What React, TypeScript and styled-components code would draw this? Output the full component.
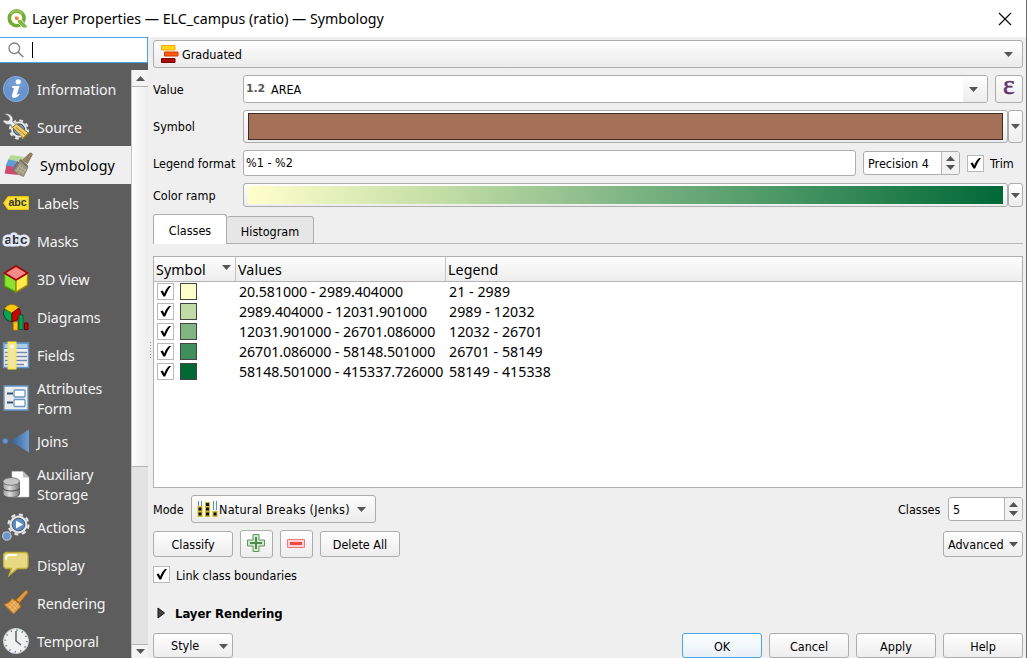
import React from 'react';
import styled, { createGlobalStyle, css } from 'styled-components';

const GlobalStyle = createGlobalStyle`
  * { box-sizing: border-box; }
  body { margin: 0; overflow: hidden; }
`;

const uiFont = css`
  font-family: 'DejaVu Sans Condensed', 'DejaVu Sans', sans-serif;
  font-stretch: condensed;
  font-size: 12.5px;
  letter-spacing: 0;
  line-height: 16px;
`;
const listFont = css`
  font-family: 'Noto Sans', 'Open Sans', sans-serif;
  font-size: 14.2px;
`;

const Window = styled.div`
  width: 1027px;
  height: 658px;
  display: flex;
  flex-direction: column;
  background: #efefef;
  border-right: 1px solid #6a6a6a;
  color: #000;
  overflow: hidden;
  white-space: nowrap;
  ${uiFont}
`;
const TitleBar = styled.header`
  height: 37px;
  flex: none;
  display: flex;
  align-items: center;
  background: #fff;
  padding: 0 14px 0 7px;
`;
const Title = styled.h1`
  ${listFont}
  font-weight: 400;
  margin: 0 auto 0 5px;
  letter-spacing: 0;
`;
const Body = styled.div`
  flex: 1;
  min-height: 0;
  display: flex;
`;
const Side = styled.aside`
  width: 148px;
  flex: none;
  display: flex;
  flex-direction: column;
  background: #5d5d5d;
`;
const Search = styled.div`
  height: 26px;
  flex: none;
  margin-bottom: 7px;
  background: #fff;
  border: 1px solid #45a7ea;
  border-left: 0;
  border-radius: 0 2px 2px 0;
  display: flex;
  align-items: center;
  padding-left: 8px;
  gap: 8px;
`;
const Caret = styled.span`
  width: 1px;
  height: 16px;
  background: #000;
`;
const SideBody = styled.div`
  flex: 1;
  min-height: 0;
  display: flex;
`;
const NavList = styled.nav`
  width: 131px;
  height: 588px;
  overflow: hidden;
`;
const NavItem = styled.div<{ $active?: boolean; $tall?: boolean }>`
  ${listFont}
  letter-spacing: ${p => (p.$active ? 0.12 : -0.1)}px;
  height: ${p => (p.$tall ? 48 : 38)}px;
  display: flex;
  align-items: center;
  gap: ${p => (p.$active ? 8 : 7)}px;
  padding-left: ${p => (p.$active ? 4 : 2)}px;
  line-height: 20px;
  color: ${p => (p.$active ? '#000' : '#f4f4f4')};
  background: ${p => (p.$active ? '#efefef' : 'transparent')};
  white-space: pre-line;
  svg { flex: none; overflow: visible; }
  span { padding-top: 2px; }
`;
const ScrollBar = styled.div`
  width: 17px;
  display: flex;
  flex-direction: column;
  background: #e3e3e3;
  border-left: 1px solid #c4c4c4;
`;
const ScrollButton = styled.div<{ $end?: boolean }>`
  height: ${p => (p.$end ? 14 : 17)}px;
  flex: none;
  display: flex;
  align-items: center;
  justify-content: center;
  background: #f4f4f4;
  border-bottom: ${p => (p.$end ? 0 : 1)}px solid #b4b4b4;
  border-top: ${p => (p.$end ? 1 : 0)}px solid #b4b4b4;
`;
const ScrollThumb = styled.div`
  height: 380px;
  flex: none;
  margin-bottom: auto;
  background: linear-gradient(90deg, #fdfdfd, #ededed);
  border-bottom: 1px solid #b4b4b4;
`;
const Splitter = styled.div`
  width: 5px;
  flex: none;
  display: flex;
  flex-direction: column;
  align-items: flex-end;
  gap: 2px;
  padding: 305px 2px 0 0;
`;
const Dot = styled.i`
  width: 1px;
  height: 1px;
  background: #999;
`;
const Main = styled.main`
  width: 870px;
  flex: none;
  padding-top: 3px;
  display: flex;
  flex-direction: column;
`;
const Row = styled.div<{ $h: number; $mt?: number }>`
  display: flex;
  flex: none;
  align-items: center;
  height: ${p => p.$h}px;
  margin-top: ${p => p.$mt ?? 0}px;
`;
const Label = styled.label<{ $w?: number }>`
  width: ${p => (p.$w ? `${p.$w}px` : 'auto')};
  flex: none;
  padding-top: 1px;
`;
const frame = css`
  border: 1px solid #adadad;
  border-radius: 3px;
`;
const Button = styled.button<{ $w: number; $h?: number; $primary?: boolean; $mr?: number }>`
  ${uiFont}
  ${frame}
  border-color: ${p => (p.$primary ? '#45a7ea' : '#adadad')};
  width: ${p => p.$w}px;
  height: ${p => p.$h ?? 26}px;
  margin: 0 ${p => p.$mr ?? 0}px 0 0;
  padding: 2px 0 0;
  flex: none;
  display: flex;
  align-items: center;
  justify-content: center;
  color: #000;
  background: ${p => (p.$primary ? 'linear-gradient(#fcfeff, #e8f0f6)' : 'linear-gradient(#fefefe, #ededed)')};
`;
const IconButton = styled(Button)`
  padding: 0;
`;
const ToolButton = styled(IconButton)`
  padding: 0 2px 2px 0;
`;
const MenuButton = styled(Button)<{ $left: number; $right: number }>`
  justify-content: space-between;
  padding: 1px ${p => p.$right}px 0 ${p => p.$left}px;
`;
const Combo = styled.div<{ $w: number; $left: number; $right: number }>`
  ${frame}
  width: ${p => p.$w}px;
  height: 28px;
  display: flex;
  align-items: center;
  padding: 0 ${p => p.$right}px 0 ${p => p.$left}px;
  background: linear-gradient(#fefefe, #ebebeb);
  > svg { flex: none; }
  > svg:last-child { margin-left: auto; }
`;
const ComboText = styled.span<{ $track?: number }>`
  padding-top: 1px;
  letter-spacing: ${p => p.$track ?? 0}px;
`;
const Field = styled.div<{ $w: number; $h: number; $mr?: number }>`
  ${frame}
  width: ${p => p.$w}px;
  height: ${p => p.$h}px;
  margin-right: ${p => p.$mr ?? 0}px;
  flex: none;
  display: flex;
  align-items: center;
  background: #fff;
  padding-left: 2px;
  overflow: hidden;
`;
const TypeTag = styled.b`
  color: #5a5a5a;
  font: bold 11px 'DejaVu Sans', sans-serif;
  letter-spacing: -0.2px;
  width: 25px;
  padding-bottom: 1px;
`;
const FieldArrow = styled.span`
  width: 24px;
  height: 100%;
  margin-left: auto;
  padding-right: 3px;
  display: flex;
  align-items: center;
  justify-content: center;
  background: linear-gradient(#fdfdfd, #ededed);
`;
const Epsilon = styled.span`
  font: 28px 'Liberation Serif', serif;
  color: #63356b;
  -webkit-text-stroke: 0.5px #63356b;
  line-height: 20px;
  padding-bottom: 8px;
`;
const SwatchFrame = styled.div<{ $h: number }>`
  ${frame}
  width: 765px;
  height: ${p => p.$h}px;
  flex: none;
  padding: 2px 4px;
  background: linear-gradient(#fefefe, #ededed);
`;
const SymbolFill = styled.div`
  height: 27px;
  background: #a57058;
  border: 1px solid #3f2e27;
`;
const RampFill = styled.div`
  height: 18px;
  background: linear-gradient(90deg, #ffffcc, #c2dda5 26%, #7fb685 50%, #3f905d 75%, #006837);
`;
const Spin = styled.div<{ $w: number; $mr?: number }>`
  ${frame}
  width: ${p => p.$w}px;
  height: 24px;
  margin-right: ${p => p.$mr ?? 0}px;
  flex: none;
  display: flex;
  background: #fff;
  overflow: hidden;
  > span { flex: 1; padding: 4px 0 0 4px; }
`;
const SpinArrows = styled.div`
  width: 18px;
  border-left: 1px solid #b4b4b4;
  background: #f2f2f2;
  display: flex;
  flex-direction: column;
  align-items: center;
  justify-content: center;
  gap: 4px;
`;
const Box = styled.span`
  width: 17px;
  height: 17px;
  flex: none;
  display: flex;
  background: #fff;
  border: 1px solid #b9b9b9;
`;
const CheckText = styled.span`
  padding: 2px 0 0 6px;
`;
const Tabs = styled.div`
  height: 30px;
  margin-top: 7px;
  flex: none;
  display: flex;
  align-items: flex-end;
`;
const Tab = styled.div<{ $w: number; $active?: boolean }>`
  width: ${p => p.$w}px;
  height: ${p => (p.$active ? 30 : 28)}px;
  display: flex;
  align-items: center;
  justify-content: center;
  padding-top: 3px;
  border: 1px solid #adadad;
  border-left-width: ${p => (p.$active ? 1 : 0)}px;
  border-bottom-width: ${p => (p.$active ? 0 : 1)}px;
  border-radius: 3px 3px 0 0;
  background: ${p => (p.$active ? '#fff' : '#e6e6e6')};
`;
const TabLine = styled.div`
  flex: 1;
  height: 1px;
  background: #b9b9b9;
`;
const Table = styled.div`
  ${listFont}
  margin-top: 12px;
  height: 232px;
  flex: none;
  border: 1px solid #b0b0b0;
  background: #fff;
`;
const Head = styled.div`
  display: flex;
  height: 25px;
  border-bottom: 1px solid #b4b4b4;
  background: linear-gradient(#fdfdfd, #ededed);
`;
const HeadCell = styled.div<{ $w?: number }>`
  ${p => (p.$w ? `width: ${p.$w}px; border-right: 1px solid #c4c4c4;` : 'flex: 1;')}
  padding: 2px 4px 0 2px;
  line-height: 22px;
  display: flex;
  justify-content: space-between;
  letter-spacing: 0.1px;
  svg { margin-top: 6px; }
`;
const ClassRow = styled.div`
  display: flex;
  align-items: flex-start;
  height: 20px;
  padding: 1px 0 0 3px;
  line-height: 18px;
  letter-spacing: -0.07px;
`;
const ClassSwatch = styled.span<{ $color: string }>`
  width: 17px;
  height: 17px;
  margin: 0 42px 0 6px;
  background: ${p => p.$color};
  border: 1px solid #444;
`;
const ClassValues = styled.span`
  width: 210px;
`;
const ClassLegend = styled.span`
  letter-spacing: 0.05px;
`;
const Spacer = styled.span`
  flex: 1;
`;
const SectionTitle = styled.b`
  font: bold 13px 'DejaVu Sans Condensed', 'DejaVu Sans', sans-serif;
  font-stretch: condensed;
  letter-spacing: -0.05px;
  margin-left: 10px;
`;

const Arrow = ({ up = false, w = 9, h = 5 }: { up?: boolean; w?: number; h?: number }) => (
  <svg width={w} height={h} viewBox="0 0 10 5" preserveAspectRatio="none">
    <path d={up ? 'M0 5 5 0 10 5Z' : 'M0 0H10L5 5Z'} fill="#555" />
  </svg>
);
const Check = () => (
  <Box>
    <svg width="15" height="15" viewBox="0 0 15 15">
      <path d="M2.500 7.200 4.800 6.500 6.200 9.600C7.200 6.800 8.600 4 11 2H13C10.300 5.200 8.800 8.600 7.200 12.600H5.400Z" fill="#000" />
    </svg>
  </Box>
);
const Spinner = ({ text, w, mr }: { text: string; w: number; mr?: number }) => (
  <Spin $w={w} $mr={mr}>
    <span>{text}</span>
    <SpinArrows><Arrow up /><Arrow /></SpinArrows>
  </Spin>
);

const gearTeeth = (cx: number, cy: number, r: number, w: number) => (
  <g>
    <circle cx={cx} cy={cy} r={r - 1} fill="none" stroke="#e6e6e6" strokeWidth={w} />
    <circle cx={cx} cy={cy} r={r + w / 2} fill="none" stroke="#e6e6e6" strokeWidth={w * 0.7} strokeDasharray={`${(r + w / 2) * 0.42} ${(r + w / 2) * 0.3654}`} />
  </g>
);

const icons: Record<string, React.ReactNode> = {
  Information: (
    <>
      <circle cx="14" cy="14" r="12.6" fill="#6795cd" stroke="#86aede" />
      <path d="M4 11A10.5 10.5 0 0 1 24 11Q14 15 4 11Z" fill="#7ba4d6" opacity=".6" />
      <circle cx="16.2" cy="6.800" r="2.600" fill="#fff" />
      <path d="M10.500 11H17.500L15 19.500Q15.600 20.300 17 18.800L17.700 19.800Q14.500 23.600 11 22.800Q9.400 22 10 20L12 13.200L10 12.800Z" fill="#fff" />
    </>
  ),
  Source: (
    <>
      {gearTeeth(17, 16.5, 7.5, 3)}
      <circle cx="17" cy="16.500" r="5.600" fill="#6795cd" stroke="#444" />
      <path d="M2.500 1Q8-.5 10.500 4.500Q11.300 6.500 10.500 8.500L15 12.500L12 15.500L8.500 11.500Q4 12.500 1 8.500L2 7L6 8L8 6L6.500 3Z" fill="#eee" stroke="#777" strokeWidth=".7" />
      <path d="M10.500 14.500 14.500 11 27 20.500 22.500 26Z" fill="#edcc6c" stroke="#8d7124" />
      <path d="M14 14.500 23 22" stroke="#9b7b2b" /><path d="M21 25 26 19.500 27.500 21.500 23.500 26.500Z" fill="#7a6325" />
    </>
  ),
  Symbology: (
    <>
      <path d="M7 4 20 6 16 13 3 10Z" fill="#b8d79a" />
      <path d="M4.500 8.500 12 10 9 18 1.500 15Z" fill="#5a9fd8" />
      <path d="M2.500 14.500 10 16 14 24 .5 22.500Z" fill="#cf4a72" />
      <path d="M10 14 13 10 16 12 13 20 9 19Z" fill="#7d6a8e" />
      <path d="M16.500 8.500 22.500 13.500 24 16 19.500 25.500Q14 24 9.500 19.500Q13 16 16.500 8.500Z" fill="#9a9680" stroke="#77715b" strokeWidth=".8" />
      <path d="M12 21 16.500 13.500M15 23 19 15.500M18 24.500 21.500 17.500M13.500 18 20.500 22.500M15 15.500 22 20" stroke="#c9c4aa" strokeWidth=".6" />
      <path d="M16.500 9 23.500 15.500" stroke="#6e6a5a" strokeWidth="1.600" />
      <path d="M18.500 9 25.500 2.300Q27.500 1.300 28.500 3.200L23.500 12.500Z" fill="#988263" stroke="#76664b" strokeWidth=".7" />
    </>
  ),
  Labels: (
    <>
      <path d="M1.500 14 6 7.500H26.500V20.500H6Z" fill="#f9df31" stroke="#e3c300" />
      <text x="6.500" y="17" fontFamily="Liberation Sans" fontWeight="700" fontSize="10.500" textLength="18" lengthAdjust="spacingAndGlyphs" fill="#333">abc</text>
    </>
  ),
  Masks: (
    <text x="2.500" y="17" fontFamily="Liberation Sans" fontWeight="700" fontSize="13.500" textLength="23" fill="#333" stroke="#e4e9fb" strokeWidth="5" strokeLinejoin="round" paintOrder="stroke">abc</text>
  ),
  '3D View': (
    <>
      <path d="M2.500 8.500 14 15V27L2.500 21Z" fill="#8ae234" stroke="#4e9a06" strokeWidth="1.400" />
      <path d="M25.500 8.500 14 15V27L25.500 20Z" fill="#fce94f" stroke="#a58b00" strokeWidth="1.400" />
      <path d="M14 1 25.500 8 14 15 2.500 8Z" fill="#f58a8a" stroke="#a40000" strokeWidth="1.500" />
    </>
  ),
  Diagrams: (
    <>
      <path d="M10 10V18.500A8.500 8.500 0 0 1 2.600 5.700Z" fill="#00a651" stroke="#222" strokeWidth=".8" />
      <path d="M10 10 2.600 5.700A8.500 8.500 0 0 1 16.800 5Z" fill="#fdc70c" stroke="#9b7900" strokeWidth=".8" />
      <path d="M10 10 16.800 5A8.500 8.500 0 0 1 10 18.500Z" fill="#c20800" stroke="#670000" strokeWidth=".8" />
      <path d="M11.500 19H15.500V27H11.500Z" fill="#fdc70c" stroke="#d38800" /><path d="M17 12H21V26.500H17Z" fill="#00a651" stroke="#065e32" /><path d="M22.500 20H26V26.500H22.500Z" fill="#c20800" stroke="#670000" />
    </>
  ),
  Fields: (
    <>
      <path d="M1.500 2H26.500V26.500H1.500Z" fill="#f0f0f0" stroke="#6795c9" strokeWidth="1.500" />
      <path d="M2 2.500H26V7.500H2Z" fill="#a9cce8" stroke="#6795c9" /><path d="M3 11.500H25M3 15.500H25M3 19.500H25M3 23.500H22" stroke="#728bad" strokeWidth="1.400" />
      <path d="M6.500 1.500H13.500V27.500H6.500Z" fill="#ede6b4" stroke="#fce94f" strokeWidth="2" /><path d="M8.500 4H11.500V7H8.500Z" fill="#fff" />
    </>
  ),
  'Attributes\nForm': (
    <>
      <path d="M2 2H26V26H2Z" fill="#ececec" stroke="#6795c9" strokeWidth="1.300" />
      <path d="M5 9.500H11M5 18.500H11" stroke="#3b526e" strokeWidth="2" />
      <rect x="12" y="6" width="11" height="7" rx="1" fill="#fff" stroke="#6795c9" strokeWidth="1.300" /><rect x="12" y="15.500" width="11" height="7" rx="1" fill="#fff" stroke="#6795c9" strokeWidth="1.300" />
    </>
  ),
  Joins: (
    <>
      <defs><linearGradient id="join"><stop stopColor="#355f91" /><stop offset="1" stopColor="#6d9ed4" /></linearGradient></defs>
      <circle cx="3.300" cy="14" r="2.800" fill="#6795c9" stroke="#3e6ca0" strokeWidth=".7" /><path d="M8.500 14 27 2.500V25.500Z" fill="url(#join)" />
    </>
  ),
  'Auxiliary\nStorage': (
    <>
      <path d="M10 1.500H21L27 7.500V27H10Z" fill="#fff" stroke="#ccc" strokeWidth=".6" /><path d="M21 1.500V7.500H27Z" fill="#bbb" />
      <defs><linearGradient id="disk"><stop stopColor="#999" /><stop offset=".4" stopColor="#ddd" /><stop offset="1" stopColor="#777" /></linearGradient></defs>
      <path d="M1 12V24C1 28.500 17.500 28.500 17.500 24V12Z" fill="url(#disk)" stroke="#555" strokeWidth=".8" />
      <path d="M1 18C1 22 17.500 22 17.500 18" fill="none" stroke="#444" />
      <ellipse cx="9.250" cy="11.500" rx="8.250" ry="3.800" fill="#c6c6c6" stroke="#666" strokeWidth=".8" />
    </>
  ),
  Actions: (
    <>
      {gearTeeth(16.5, 11.5, 8.5, 3)}
      <circle cx="16.500" cy="11.500" r="6.300" fill="#5d8fc9" stroke="#456" strokeWidth="1" /><path d="M14 7.500 21 11.500 14 15.500Z" fill="#fff" />
      <circle cx="4.800" cy="23" r="4.200" fill="#6795cd" stroke="#c9cdd2" strokeDasharray="1.700 .5" strokeWidth="1.300" />
    </>
  ),
  Display: (
    <>
      <path d="M5 1.500H23Q26 1.500 26 5V14Q26 17.500 23 17.500H15.500L7 24.500 9.500 17.500H5Q1.500 17.500 1.500 14V5Q1.500 1.500 5 1.500Z" fill="#e8da84" stroke="#c0ac3c" strokeWidth="1.300" />
      <path d="M4 8Q4 4 8 4H14" fill="none" stroke="#fff" strokeWidth="1.800" strokeLinecap="round" />
    </>
  ),
  Rendering: (
    <>
      <path d="M14 11 23.500 1.500Q26 1 26 3.500L17.500 14Z" fill="#dc9a42" stroke="#a96716" />
      <path d="M10 9.500Q15 11.500 19 17.500L11.500 25 2 15.500Q8 14 10 9.500Z" fill="#df9e4b" stroke="#ad6b1c" />
      <path d="M5 15.500 13 23M8 14 15 21M10 12 17 19M7 19 14 12M10 22 17 14" stroke="#f7c985" strokeWidth=".6" />
    </>
  ),
  Temporal: (
    <>
      <circle cx="14" cy="14" r="12.500" fill="#f0f0ee" stroke="#d5d5d5" />
      <circle cx="14" cy="14" r="10.800" fill="none" stroke="#587da2" strokeWidth="1.700" strokeDasharray="1.200 4.455" />
      <path d="M14 4V14L19 18" fill="none" stroke="#5d6368" strokeWidth="1.500" />
    </>
  ),
};

const classes = [
  ['#ffffcc', '20.581000 - 2989.404000', '21 - 2989'],
  ['#c0dba6', '2989.404000 - 12031.901000', '2989 - 12032'],
  ['#80b483', '12031.901000 - 26701.086000', '12032 - 26701'],
  ['#408e5d', '26701.086000 - 58148.501000', '26701 - 58149'],
  ['#006837', '58148.501000 - 415337.726000', '58149 - 415338'],
];

export default function App() {
  return (
    <Window>
      <GlobalStyle />
      <TitleBar>
        <svg width="20" height="20" viewBox="0 0 20 20">
          <circle cx="9.700" cy="9.300" r="7.400" fill="none" stroke="#75ab33" strokeWidth="3.600" />
          <path d="M3.500 5A7.500 7.500 0 0 1 15.500 4.500" fill="none" stroke="#9cc653" strokeWidth="1.800" />
          <path d="M10.500 10.500H14L20 16.500V19H16L10.500 13.500Z" fill="#86b846" stroke="#fff" strokeWidth=".8" />
          <path d="M8 7.500H11L12 9.500 10.500 11.500 8 10.500Z" fill="#f08a30" />
        </svg>
        <Title>Layer Properties — ELC_campus (ratio) — Symbology</Title>
        <svg width="14" height="14" viewBox="0 0 14 14"><path d="M1 1 13 13M13 1 1 13" stroke="#000" strokeWidth="1.100" /></svg>
      </TitleBar>
      <Body>
        <Side>
          <Search>
            <svg width="16" height="16" viewBox="0 0 16 16"><circle cx="6.300" cy="6.300" r="5.300" fill="none" stroke="#808080" strokeWidth="1.300" /><path d="M10 10 15.300 15" stroke="#808080" strokeWidth="1.600" /></svg>
            <Caret />
          </Search>
          <SideBody>
            <NavList>
              {Object.entries(icons).map(([name, drawing]) => (
                <NavItem key={name} $active={name === 'Symbology'} $tall={name.includes('\n')}>
                  <svg width="28" height="28" viewBox="0 0 28 28">{drawing}</svg>
                  <span>{name}</span>
                </NavItem>
              ))}
            </NavList>
            <ScrollBar>
              <ScrollButton><Arrow up /></ScrollButton>
              <ScrollThumb />
              <ScrollButton $end><Arrow /></ScrollButton>
            </ScrollBar>
          </SideBody>
        </Side>
        <Splitter>{[0, 1, 2, 3, 4, 5].map(i => <Dot key={i} />)}</Splitter>
        <Main>
          <Row $h={28}>
            <Combo $w={870} $left={7} $right={9}>
              <svg width="21" height="20" viewBox="0 0 21 20">
                <path d="M.5 1.500H14V6H.5Z" fill="#ffd51c" stroke="#f2ad00" /><path d="M3.500 8H17V12H3.500Z" fill="#ff5907" stroke="#d83a00" /><path d="M.5 14.500H14V18.500H.5Z" fill="#ad0b05" stroke="#790000" />
              </svg>
              <ComboText>Graduated</ComboText>
              <Arrow />
            </Combo>
          </Row>
          <Row $h={28} $mt={7}>
            <Label $w={90}>Value</Label>
            <Field $w={745} $h={28} $mr={7}>
              <TypeTag>1.2</TypeTag><ComboText>AREA</ComboText>
              <FieldArrow><Arrow /></FieldArrow>
            </Field>
            <IconButton $w={28} $h={28}><Epsilon>ε</Epsilon></IconButton>
          </Row>
          <Row $h={33} $mt={7}>
            <Label $w={90}>Symbol</Label>
            <SwatchFrame $h={33}><SymbolFill /></SwatchFrame>
            <IconButton $w={15} $h={33}><Arrow /></IconButton>
          </Row>
          <Row $h={26} $mt={7}>
            <Label $w={90}>Legend format</Label>
            <Field $w={613} $h={26} $mr={7}>%1 - %2</Field>
            <Spinner text="Precision 4" w={97} mr={7} />
            <Check /><CheckText>Trim</CheckText>
          </Row>
          <Row $h={24} $mt={7}>
            <Label $w={90}>Color ramp</Label>
            <SwatchFrame $h={24}><RampFill /></SwatchFrame>
            <IconButton $w={15} $h={24}><Arrow /></IconButton>
          </Row>
          <Tabs>
            <Tab $w={74} $active>Classes</Tab>
            <Tab $w={87}>Histogram</Tab>
            <TabLine />
          </Tabs>
          <Table>
            <Head>
              <HeadCell $w={82}>Symbol<Arrow /></HeadCell>
              <HeadCell $w={210}>Values</HeadCell>
              <HeadCell>Legend</HeadCell>
            </Head>
            {classes.map(([color, values, legend]) => (
              <ClassRow key={color}>
                <Check /><ClassSwatch $color={color} />
                <ClassValues>{values}</ClassValues><ClassLegend>{legend}</ClassLegend>
              </ClassRow>
            ))}
          </Table>
          <Row $h={28} $mt={7}>
            <Label $w={38}>Mode</Label>
            <Combo $w={185} $left={5} $right={9}>
              <svg width="22" height="18" viewBox="0 0 22 18">
                <path d="M1.500 1V6M4.500 1V6M16.500 1V10M19.500 1V10" stroke="#5c8ec7" />
                <path d="M.5 6H5.500V17H.5ZM8 2H13V17H8ZM15.500 11H20.500V17H15.500Z" fill="#d1bd27" />
                <path d="M1.500 7.500H4.500V10.500H1.500ZM1.500 12.500H4.500V15.500H1.500ZM9 3H12V6H9ZM9 7.500H12V10.500H9ZM9 12.500H12V15.500H9ZM16.500 12.500H19.500V15.500H16.500Z" fill="#111" />
              </svg>
              <ComboText $track={0.25}>Natural Breaks (Jenks)</ComboText>
              <Arrow />
            </Combo>
            <Spacer />
            <Label $w={50}>Classes</Label>
            <Spinner text="5" w={75} />
          </Row>
          <Row $h={28} $mt={7}>
            <Button $w={80} $mr={7}>Classify</Button>
            <ToolButton $w={33} $h={28} $mr={7}>
              <svg width="18" height="18" viewBox="0 0 18 18"><path d="M6 .5H12V6H17.500V12H12V17.500H6V12H.5V6H6Z" fill="#d4e5d1" stroke="#5e985e" /><path d="M9 3V15M3 9H15" stroke="#4d8a4e" strokeWidth="2" /></svg>
            </ToolButton>
            <ToolButton $w={33} $h={28} $mr={7}>
              <svg width="18" height="9" viewBox="0 0 18 9"><path d="M.5.5H17.500V8.500H.5Z" fill="#ffd2d2" stroke="#ef7878" /><path d="M3 4.500H15" stroke="#ee4848" strokeWidth="3" /></svg>
            </ToolButton>
            <Button $w={80}>Delete All</Button>
            <Spacer />
            <MenuButton $w={80} $left={4} $right={4}>Advanced<Arrow /></MenuButton>
          </Row>
          <Row $h={17} $mt={8}><Check /><CheckText>Link class boundaries</CheckText></Row>
          <Row $h={20} $mt={20}>
            <svg width="12" height="12" viewBox="0 0 12 12"><path d="M5 1 11.500 6 5 11Z" fill="#444" stroke="#111" /></svg>
            <SectionTitle>Layer Rendering</SectionTitle>
          </Row>
          <Row $h={25} $mt={10}>
            <MenuButton $w={80} $h={25} $left={17} $right={4}>Style<Arrow /></MenuButton>
            <Spacer />
            <Button $w={80} $h={25} $mr={7} $primary>OK</Button>
            <Button $w={80} $h={25} $mr={7}>Cancel</Button>
            <Button $w={80} $h={25} $mr={7}>Apply</Button>
            <Button $w={80} $h={25}>Help</Button>
          </Row>
        </Main>
      </Body>
    </Window>
  );
}
